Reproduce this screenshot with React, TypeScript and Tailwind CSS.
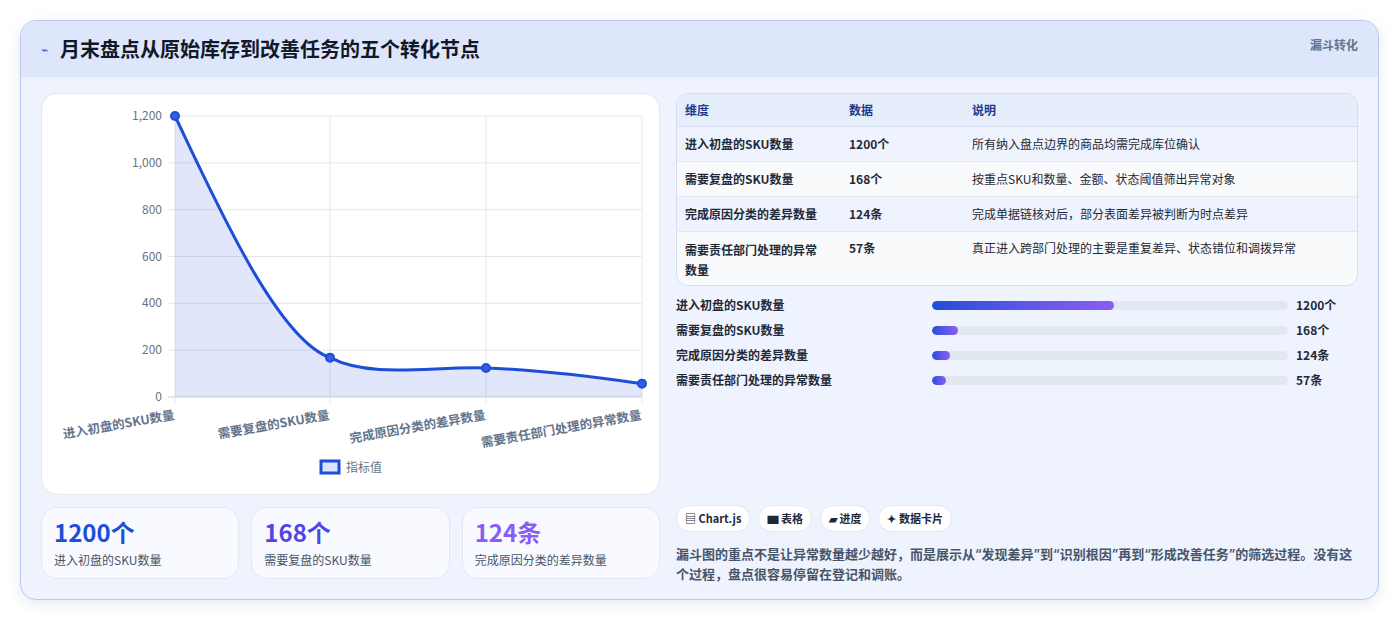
import React from "react";

const F = { fontFamily: '"Noto Sans CJK SC","Noto Sans",sans-serif' };
const FI = { fontFamily: 'Inter,"Noto Sans CJK SC",sans-serif' };
const labels = ["进入初盘的SKU数量", "需要复盘的SKU数量", "完成原因分类的差异数量", "需要责任部门处理的异常数量"];
const vals = [1200, 168, 124, 57];
const units = ["个", "个", "条", "条"];
const xs = [133, 288, 444, 600];
const yv = (v: number) => 303 - (v / 1200) * 281;

function Chart() {
  const pts = vals.map((v, i) => [xs[i], yv(v)]);
  const line = "M133,22 C175,110 235,245 288,263.7 C330,285 390,272 444,274 C500,276 560,284 600,289.7";
  const ticks = [0, 200, 400, 600, 800, 1000, 1200];
  return (
    <svg width="619" height="402" viewBox="0 0 619 402" className="block">
      {ticks.map((t) => (
        <g key={t}>
          <line x1={126} x2={600} y1={yv(t)} y2={yv(t)} stroke={t === 0 ? "#cbd5e1" : "#e5e7eb"} />
          <text x={120} y={yv(t) + 4} textAnchor="end" fontSize="12" fill="#6b7280" style={F}>
            {t.toLocaleString("en-US")}
          </text>
        </g>
      ))}
      {xs.map((x) => (
        <line key={x} x1={x} x2={x} y1={22} y2={310} stroke="#e5e7eb" />
      ))}
      <path d={line + " L600,303 L133,303 Z"} fill="rgba(59,90,220,0.15)" />
      <path d={line} fill="none" stroke="#1d4ed8" strokeWidth="3" />
      {pts.map(([x, y], i) => (
        <circle key={i} cx={x} cy={y} r="4" fill="#3b5bdb" stroke="#1d4ed8" strokeWidth="2" />
      ))}
      {labels.map((l, i) => (
        <text key={l} x={xs[i]} y={325} textAnchor="end" fontSize="12.5" fontWeight="700" fill="#64748b" transform={`rotate(-10 ${xs[i]} 325)`} style={F}>
          {l}
        </text>
      ))}
      <rect x={279} y={367} width={18} height={12} fill="#dbe4fb" stroke="#1d4ed8" strokeWidth="3" />
      <text x={304} y={378} fontSize="12" fill="#64748b" style={F}>指标值</text>
    </svg>
  );
}

export default function App() {
  const desc = [
    "所有纳入盘点边界的商品均需完成库位确认",
    "按重点SKU和数量、金额、状态阈值筛出异常对象",
    "完成单据链核对后，部分表面差异被判断为时点差异",
    "真正进入跨部门处理的主要是重复差异、状态错位和调拨异常",
  ];
  const widths = ["51%", "7.3%", "5%", "4%"];
  return (
    <div className="w-[1399px] h-[621px] bg-white pt-5 px-5" style={F}>
      <div className="h-[580px] rounded-2xl border border-[#b9c8ee] bg-[#eef3fd] overflow-hidden shadow-[0_4px_14px_rgba(100,116,139,0.15)]">
        <div className="h-[56px] bg-[#dde6fb] flex items-start justify-between px-5">
          <div className="flex items-center gap-3 h-full">
            <span className="text-[#3b5bdb] text-xs">⌁</span>
            <span className="text-[20px] font-bold text-[#111827]">月末盘点从原始库存到改善任务的五个转化节点</span>
          </div>
          <span className="mt-4 text-xs font-bold text-[#64748b]">漏斗转化</span>
        </div>
        <div className="flex gap-4 px-5 pt-4">
          <div className="w-[619px] flex flex-col gap-3">
            <div className="h-[402px] bg-white rounded-2xl border border-[#e2e8f0]">
              <Chart />
            </div>
            <div className="flex gap-3">
              {[0, 1, 2].map((i) => (
                <div key={i} className="flex-1 h-[72px] rounded-2xl border border-[#e2e8f0] bg-[#f8faff] px-3 pt-2">
                  <div className={"text-[24px] font-bold leading-8 " + ["text-[#1d4ed8]", "text-[#4f46e5]", "text-[#8b5cf6]"][i]}>
                    {vals[i]}{units[i]}
                  </div>
                  <div className="text-xs text-[#475569] mt-1">{labels[i]}</div>
                </div>
              ))}
            </div>
          </div>
          <div className="flex-1 flex flex-col">
            <div className="rounded-xl border border-[#d5deef] overflow-hidden text-xs text-[#1f2937]">
              <div className="flex h-[33px] items-center bg-[#e6edfb] font-bold text-[#1e3a8a] border-b border-[#d5deef]">
                <div className="w-[172px] pl-2">维度</div><div className="w-[123px]">数据</div><div>说明</div>
              </div>
              {labels.map((l, i) => (
                <div key={l} className={"flex border-b border-[#e2e8f0] last:border-b-0 " + (i % 2 ? "bg-[#f8fafc]" : "bg-[#eef3fd]") + (i === 3 ? " h-[53px] pt-2" : " h-[35px] items-center")}>
                  <div className="w-[172px] pl-2 pr-6 font-semibold leading-[20px]">{l}</div>
                  <div className="w-[123px] font-semibold">{vals[i]}{units[i]}</div>
                  <div>{desc[i]}</div>
                </div>
              ))}
            </div>
            <div className="mt-[11px] flex flex-col gap-[9px] text-xs font-semibold text-[#1f2937]">
              {labels.map((l, i) => (
                <div key={l} className="flex items-center h-4">
                  <div className="w-[256px]">{l}</div>
                  <div className="w-[356px] h-[9px] rounded-full bg-[#e2e8f0] overflow-hidden">
                    <div className="h-full rounded-full bg-gradient-to-r from-[#1d4ed8] to-[#8b5cf6]" style={{ width: widths[i] }} />
                  </div>
                  <div className="ml-2 font-bold">{vals[i]}{units[i]}</div>
                </div>
              ))}
            </div>
            <div className="mt-[117px] flex gap-2 text-[11px] font-semibold text-[#1f2937]">
              {["▤ Chart.js", "▆ 表格", "▰ 进度", "✦ 数据卡片"].map((c) => (
                <span key={c} className="h-[27px] px-2 flex items-center rounded-full bg-white border border-[#e2e8f0]">{c}</span>
              ))}
            </div>
            <p className="mt-3 text-[13px] leading-[20px] text-[#475569] font-semibold" style={FI}>
              漏斗图的重点不是让异常数量越少越好，而是展示从“发现差异”到“识别根因”再到“形成改善任务”的筛选过程。没有这个过程，盘点很容易停留在登记和调账。
            </p>
          </div>
        </div>
      </div>
    </div>
  );
}
